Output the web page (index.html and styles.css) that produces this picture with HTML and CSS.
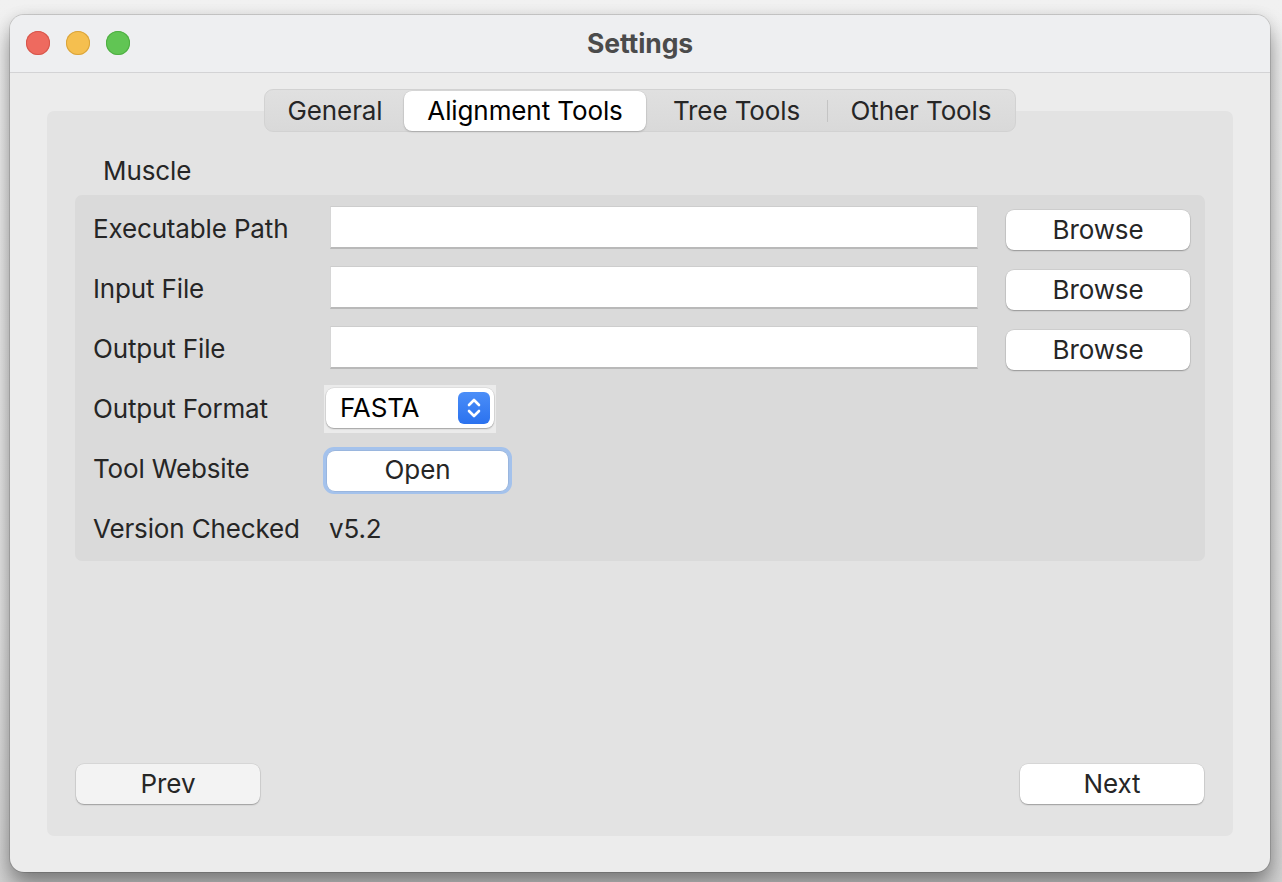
FILE: index.html
```html
<!DOCTYPE html>
<html lang="en">
<head>
<meta charset="utf-8">
<title>Settings</title>
<link rel="stylesheet" href="styles.css">
</head>
<body>
<div class="window">
  <div class="titlebar">
    <div class="lights">
      <span class="light red"></span>
      <span class="light yellow"></span>
      <span class="light green"></span>
    </div>
    <div class="title">Settings</div>
    <div></div>
  </div>
  <div class="content">
    <div class="tabs">
      <div class="tab tab-general">General</div>
      <div class="tab tab-align active">Alignment Tools</div>
      <div class="tab tab-tree">Tree Tools</div>
      <div class="sep"></div>
      <div class="tab tab-other">Other Tools</div>
    </div>
    <div class="pane">
      <div class="group-title">Muscle</div>
      <div class="group">
        <div class="label">Executable Path</div>
        <div class="field"></div>
        <button class="btn">Browse</button>

        <div class="label">Input File</div>
        <div class="field"></div>
        <button class="btn">Browse</button>

        <div class="label">Output File</div>
        <div class="field"></div>
        <button class="btn">Browse</button>

        <div class="label">Output Format</div>
        <div class="popup-frame">
          <div class="popup">
            <span class="popup-text">FASTA</span>
            <span class="stepper">
              <svg width="32" height="32" viewBox="0 0 32 32" fill="none" stroke="#fff" stroke-width="2.6" stroke-linecap="round" stroke-linejoin="round">
                <path d="M11 13 L16 8 L21 13"/>
                <path d="M11 19 L16 24 L21 19"/>
              </svg>
            </span>
          </div>
        </div>
        <div></div>

        <div class="label">Tool Website</div>
        <div class="focus-ring"><button class="btn open">Open</button></div>
        <div></div>

        <div class="label">Version Checked</div>
        <div class="value">v5.2</div>
        <div></div>
      </div>
      <div class="spacer"></div>
      <div class="nav">
        <button class="btn nav-btn prev">Prev</button>
        <button class="btn nav-btn">Next</button>
      </div>
    </div>
  </div>
</div>
</body>
</html>
```

FILE: styles.css
```css
* { box-sizing: border-box; }

html, body {
  margin: 0;
  padding: 0;
}

body {
  width: 1282px;
  height: 882px;
  overflow: hidden;
  background: linear-gradient(#f1f1f1, #e6e6e6 70%, #d4d4d4);
  font-family: Inter, "Noto Sans", sans-serif;
  color: #262626;
}

.window {
  margin: 15px 0 0 10px;
  width: 1260px;
  height: 857px;
  border-radius: 14px;
  background: #ececec;
  box-shadow: 0 0 0 1px rgba(0, 0, 0, 0.13), 0 14px 22px rgba(0, 0, 0, 0.4), 0 0 14px rgba(0, 0, 0, 0.08);
  display: flex;
  flex-direction: column;
  overflow: hidden;
}

.titlebar {
  flex: none;
  height: 58px;
  background: #eeeff1;
  border-bottom: 1px solid #d3d3d5;
  display: grid;
  grid-template-columns: 1fr auto 1fr;
  align-items: center;
  padding: 0 16px;
}

.lights {
  display: flex;
  gap: 16px;
  padding-bottom: 2px;
}

.light {
  width: 24px;
  height: 24px;
  border-radius: 50%;
}
.red { background: #ee6a5f; box-shadow: inset 0 0 0 1px #d6574c; }
.yellow { background: #f5bf4f; box-shadow: inset 0 0 0 1px #d9a43c; }
.green { background: #61c554; box-shadow: inset 0 0 0 1px #4fae43; }

.title {
  font-weight: 700;
  font-size: 26.5px;
  color: #4b4b4b;
  padding-bottom: 2px;
  letter-spacing: -0.1px;
}

.content {
  flex: 1;
  display: flex;
  flex-direction: column;
  align-items: center;
  padding: 16px 37px 36px;
}

.tabs {
  position: relative;
  z-index: 1;
  display: flex;
  align-items: center;
  height: 43px;
  padding: 0 1px;
  background: linear-gradient(#e0e0e0, #d9d9d9);
  border: 1px solid #d2d2d2;
  border-radius: 9px;
  font-size: 26px;
}

.tab {
  height: 40px;
  display: flex;
  align-items: center;
  justify-content: center;
  color: #262626;
  letter-spacing: -0.1px;
  white-space: nowrap;
}

.tab-general { width: 138px; }
.tab-align { width: 242px; }
.tab-tree { width: 181px; }
.tab-other { width: 186px; }

.tab.active {
  background: #fff;
  color: #000;
  border-radius: 8px;
  box-shadow: 0 1px 2px rgba(0, 0, 0, 0.18), 0 0 0 0.5px rgba(0, 0, 0, 0.08);
}

.sep {
  width: 1px;
  height: 22px;
  background: #c4c4c4;
}

.pane {
  align-self: stretch;
  flex: 1;
  margin-top: -21px;
  background: #e3e3e3;
  border-radius: 7px;
  display: flex;
  flex-direction: column;
  padding: 44px 28px 32px;
}

.group-title {
  font-size: 26px;
  line-height: 32px;
  margin-left: 28px;
  letter-spacing: -0.1px;
}

.group {
  margin-top: 8px;
  background: #dadada;
  border-radius: 7px;
  padding: 4px 15px 2px 18px;
  display: grid;
  grid-template-columns: 209px 648px 184px;
  column-gap: 28px;
  grid-auto-rows: 60px;
  align-items: center;
  font-size: 26px;
  letter-spacing: -0.15px;
}

.label, .value {
  line-height: 32px;
}

.value { margin-left: -1px; }

.field {
  height: 43px;
  margin-top: -4px;
  background: #fff;
  border-top: 1px solid #cdcdcd;
  border-left: 1px solid #d6d6d6;
  border-right: 1px solid #d6d6d6;
  border-bottom: 2px solid #b9b9b9;
}

.btn {
  font-family: inherit;
  font-size: 26px;
  letter-spacing: -0.1px;
  color: #262626;
  background: #fff;
  border: none;
  border-radius: 8px;
  height: 40px;
  padding: 0 0 2px;
  box-shadow: 0 1px 1.5px rgba(0, 0, 0, 0.28), 0 0 0 0.5px rgba(0, 0, 0, 0.1);
}

.group .btn { margin-top: 2px; }

.popup-frame {
  justify-self: start;
  margin-left: -6px;
  width: 172px;
  height: 48px;
  background: #ebebeb;
  padding: 3px 2px 5px;
}

.popup {
  height: 40px;
  background: #fff;
  border-radius: 8px;
  box-shadow: 0 1px 1.5px rgba(0, 0, 0, 0.28), 0 0 0 0.5px rgba(0, 0, 0, 0.1);
  display: flex;
  align-items: center;
  justify-content: space-between;
  padding: 0 4px 0 14px;
}

.popup-text {
  color: #000;
  padding-bottom: 1px;
}

.stepper {
  width: 32px;
  height: 32px;
  border-radius: 6px;
  background: linear-gradient(#4b8ef8, #2b72ef);
  display: flex;
}

.focus-ring {
  justify-self: start;
  margin-left: -7px;
  margin-top: 2px;
  width: 189px;
  height: 47px;
  border-radius: 11px;
  background: #a4c2ec;
  padding: 4px 4px 3px;
  display: flex;
}

.btn.open {
  width: 181px;
  margin-top: 0;
  box-shadow: 0 0 0 0.5px rgba(0, 0, 0, 0.12);
}

.spacer { flex: 1; }

.nav {
  display: flex;
  justify-content: space-between;
  padding: 0 1px;
}

.nav-btn {
  width: 184px;
}

.nav-btn.prev {
  background: #f3f3f3;
}
```
